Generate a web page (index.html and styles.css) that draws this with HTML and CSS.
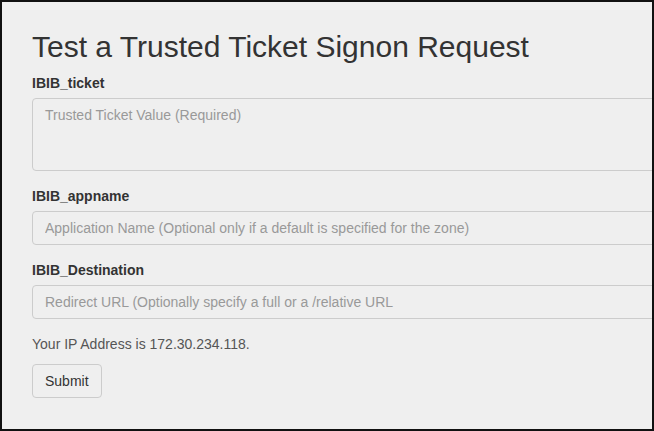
FILE: index.html
```html
<!DOCTYPE html>
<html>
<head>
<meta charset="utf-8">
<link rel="stylesheet" href="styles.css">
</head>
<body>
<div class="frame">
  <div class="container">
    <h1 class="title">Test a Trusted Ticket Signon Request</h1>
    <form class="form">
      <div class="form-group">
        <label class="label">IBIB_ticket</label>
        <textarea class="control area" placeholder="Trusted Ticket Value (Required)"></textarea>
      </div>
      <div class="form-group">
        <label class="label">IBIB_appname</label>
        <input class="control" type="text" placeholder="Application Name (Optional only if a default is specified for the zone)">
      </div>
      <div class="form-group">
        <label class="label">IBIB_Destination</label>
        <input class="control" type="text" placeholder="Redirect URL (Optionally specify a full or a /relative URL">
      </div>
      <p class="ip">Your IP Address is 172.30.234.118.</p>
      <button class="btn" type="button">Submit</button>
    </form>
  </div>
</div>
</body>
</html>
```

FILE: styles.css
```css
* { box-sizing: border-box; }
html, body {
  margin: 0;
  padding: 0;
  width: 654px;
  height: 431px;
  overflow: hidden;
}
body {
  font-family: "Liberation Sans", Arial, sans-serif;
  font-size: 14px;
  line-height: 20px;
  color: #333;
}
.frame {
  width: 654px;
  height: 431px;
  border: 2px solid #111;
  background: #efefef;
  overflow: hidden;
}
.container {
  padding: 28px 0 0 30px;
  width: 760px;
}
.title {
  margin: 0 0 10px 0;
  font-size: 30px;
  line-height: 33px;
  font-weight: 400;
  color: #333;
}
.form-group {
  margin-bottom: 15px;
}
.label {
  display: block;
  font-weight: 700;
  margin-bottom: 5px;
  color: #333;
}
.control {
  display: block;
  width: 700px;
  height: 34px;
  padding: 6px 12px;
  font-family: inherit;
  font-size: 14px;
  line-height: 20px;
  color: #555;
  background: transparent;
  border: 1px solid #ccc;
  border-radius: 4px;
  margin: 0;
  outline: none;
}
.area {
  height: 73px;
  resize: none;
}
.control::placeholder {
  color: #999;
  opacity: 1;
}
.ip {
  margin: 0 0 10px 0;
  color: #555;
}
.btn {
  display: inline-block;
  height: 34px;
  padding: 6px 12px;
  font-family: inherit;
  font-size: 14px;
  line-height: 20px;
  color: #333;
  background: transparent;
  border: 1px solid #ccc;
  border-radius: 4px;
}
```
